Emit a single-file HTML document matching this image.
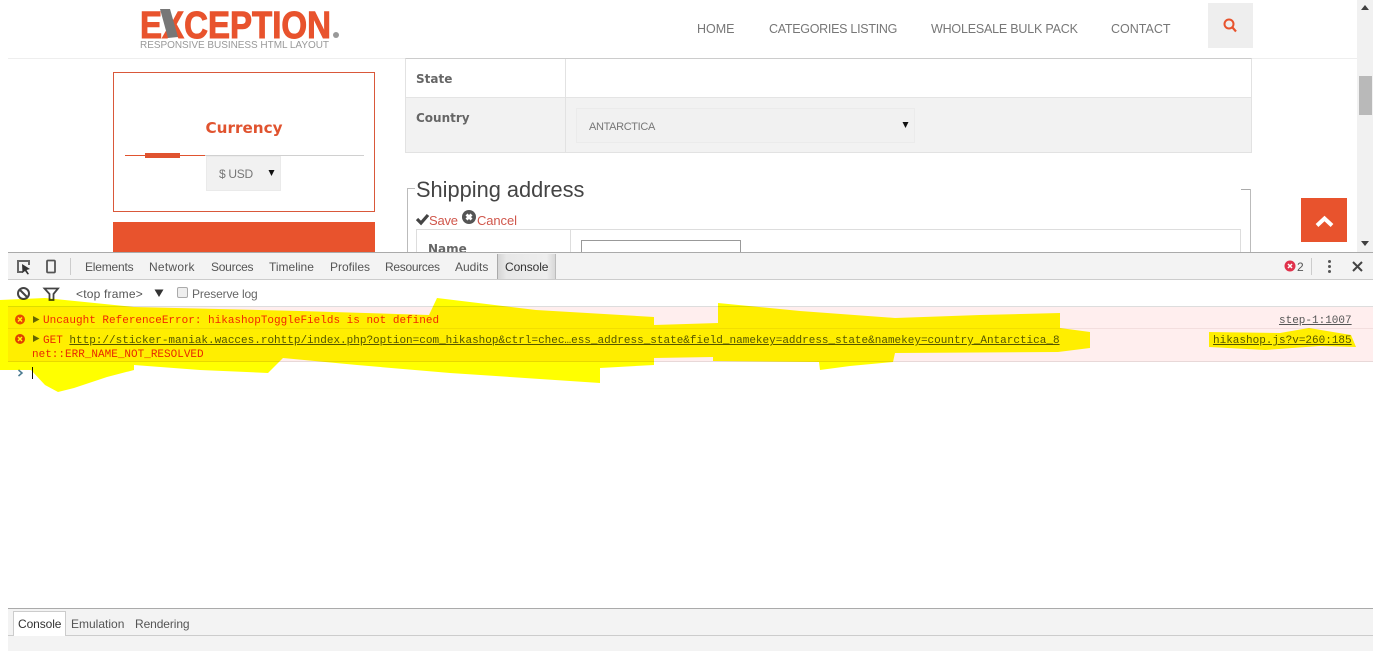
<!DOCTYPE html>
<html><head><meta charset="utf-8">
<style>
html,body{margin:0;padding:0;background:#fff;width:1373px;height:651px;overflow:hidden}
body{position:relative;font-family:"Liberation Sans",sans-serif}
.a{position:absolute;white-space:nowrap}
.box{position:absolute;box-sizing:border-box}
.dt{font-size:12px;color:#555;top:260px;line-height:14px}
.m{font-family:"Liberation Mono",monospace;font-size:11px;line-height:14px}
.nav{top:21px;font-size:12.5px;color:#777;line-height:16px}
</style></head><body>

<!-- page header -->
<svg class="a" style="left:130px;top:0" width="220" height="55">
<text x="10" y="38" font-family="Liberation Sans" font-weight="bold" font-size="38" fill="#e8532d" stroke="#e8532d" stroke-width="1" textLength="191" lengthAdjust="spacingAndGlyphs">EXCEPTION</text>
<path d="M30 9L40 9L48 37L38 38Z" fill="#777"/>
<circle cx="206" cy="35" r="3" fill="#999"/>
<text x="10" y="48" font-family="Liberation Sans" font-size="10" fill="#999" textLength="189" lengthAdjust="spacing">RESPONSIVE BUSINESS HTML LAYOUT</text>
</svg>
<div class="a nav" style="left:697px">HOME</div>
<div class="a nav" style="left:769px;letter-spacing:-.28px">CATEGORIES LISTING</div>
<div class="a nav" style="left:931px;letter-spacing:-.2px">WHOLESALE BULK PACK</div>
<div class="a nav" style="left:1111px">CONTACT</div>
<div class="box" style="left:1208px;top:3px;width:45px;height:45px;background:#eee"></div>
<svg class="a" style="left:1222px;top:17px" width="16" height="16"><circle cx="7" cy="7" r="4.500" fill="none" stroke="#e8532d" stroke-width="2"/><path d="M10.500 10.500L14 14.500" stroke="#e8532d" stroke-width="2.200"/></svg>
<div class="box" style="left:8px;top:58px;width:1349px;height:1px;background:#eee"></div>

<!-- scrollbar -->
<div class="box" style="left:1357px;top:0;width:16px;height:252px;background:#f1f1f1"></div>
<div class="box" style="left:1359px;top:76px;width:13px;height:39px;background:#b9b9b9"></div>
<svg class="a" style="left:1357px;top:0" width="16" height="252"><path d="M4 10L8 5L12 10Z" fill="#404040"/><path d="M4 241L8 246L12 241Z" fill="#404040"/></svg>

<!-- currency -->
<div class="box" style="left:113px;top:72px;width:262px;height:140px;border:1px solid #d9583a"></div>
<div class="a" style="left:113px;width:262px;top:118px;text-align:center;font-weight:bold;line-height:20px;color:#e0532f;font-family:'DejaVu Sans','Liberation Sans',sans-serif;font-size:15.200px">Currency</div>
<div class="box" style="left:125px;top:155px;width:239px;height:1px;background:#d0d0d0"></div>
<div class="box" style="left:125px;top:155px;width:80px;height:1px;background:#e0532f"></div>
<div class="box" style="left:145px;top:153px;width:35px;height:5px;background:#e0532f"></div>
<div class="box" style="left:206px;top:156px;width:75px;height:35px;background:#f1f1f1;border:1px solid #eaeaea"></div>
<div class="a" style="left:219px;top:166px;font-size:12px;letter-spacing:-.3px;line-height:16px;color:#777">$ USD</div>
<svg class="a" style="left:267px;top:169px" width="9" height="8"><path d="M1.500 1H7.500L4.500 7Z" fill="#111"/></svg>
<div class="box" style="left:113px;top:222px;width:262px;height:30px;background:#e8532d"></div>

<!-- form table -->
<div class="box" style="left:405px;top:58px;width:847px;height:95px;border:1px solid #e2e2e2;border-top-color:#ccc"></div>
<div class="box" style="left:406px;top:97px;width:845px;height:55px;background:#f2f2f2;border-top:1px solid #e4e4e4"></div>
<div class="box" style="left:565px;top:59px;width:1px;height:93px;background:#e2e2e2"></div>
<div class="a" style="left:416px;top:71px;font-weight:bold;line-height:16px;color:#666;font-family:'DejaVu Sans',sans-serif;font-size:12px">State</div>
<div class="a" style="left:416px;top:110px;font-weight:bold;font-size:12px;line-height:16px;color:#666;font-family:'DejaVu Sans',sans-serif">Country</div>
<div class="box" style="left:576px;top:108px;width:339px;height:35px;background:#f1f1f1;border:1px solid #ebebeb"></div>
<div class="a" style="left:589px;top:119px;font-size:11px;letter-spacing:-.35px;line-height:16px;color:#777">ANTARCTICA</div>
<svg class="a" style="left:901px;top:121px" width="9" height="8"><path d="M1.500 1H7.500L4.500 7Z" fill="#111"/></svg>

<!-- shipping fieldset -->
<div class="box" style="left:407px;top:188px;width:1px;height:64px;background:#bbb"></div>
<div class="box" style="left:407px;top:188px;width:8px;height:1px;background:#bbb"></div>
<div class="box" style="left:1241px;top:189px;width:10px;height:1px;background:#aaa"></div>
<div class="box" style="left:1250px;top:189px;width:1px;height:63px;background:#bbb"></div>
<div class="a" style="left:416px;top:176px;font-size:21.800px;line-height:28px;color:#444">Shipping address</div>
<svg class="a" style="left:416px;top:212px" width="14" height="14"><path d="M1 7L5 11L12 3" fill="none" stroke="#444" stroke-width="3.200"/></svg>
<div class="a" style="left:429px;top:212px;font-size:13px;letter-spacing:-.2px;line-height:17px;color:#d0574c">Save</div>
<svg class="a" style="left:462px;top:210px" width="15" height="15"><circle cx="7" cy="7" r="7" fill="#555"/><path d="M4.500 4.500L9.500 9.500M9.500 4.500L4.500 9.500" stroke="#fff" stroke-width="2.800"/></svg>
<div class="a" style="left:477px;top:212px;font-size:13px;letter-spacing:-.1px;line-height:17px;color:#d0574c">Cancel</div>
<div class="box" style="left:416px;top:229px;width:825px;height:23px;border:1px solid #ddd;border-bottom:0"></div>
<div class="box" style="left:570px;top:230px;width:1px;height:22px;background:#ddd"></div>
<div style="position:absolute;left:428px;top:241px;height:11px;overflow:hidden"><div style="font-weight:bold;line-height:16px;color:#666;font-family:'DejaVu Sans',sans-serif;font-size:12px">Name</div></div>
<div class="box" style="left:581px;top:240px;width:160px;height:12px;border:1px solid #999;border-bottom:0"></div>

<div class="box" style="left:1301px;top:198px;width:46px;height:44px;background:#e8532d"></div>
<svg class="a" style="left:1301px;top:198px" width="46" height="44"><path d="M16 27.500L23.500 20.500L31 27.500" fill="none" stroke="#fff" stroke-width="4"/></svg>

<!-- devtools -->
<div class="box" style="left:8px;top:252px;width:1365px;height:399px;background:#fff"></div>
<div class="box" style="left:8px;top:252px;width:1365px;height:28px;background:#f3f3f3;border-top:1px solid #aaa;border-bottom:1px solid #ccc"></div>
<svg class="a" style="left:14px;top:258px" width="46" height="18">
<path d="M9 14H4V3H15V7" fill="none" stroke="#666" stroke-width="2"/><path d="M8 6L16 11L12.500 12L15 16L13.500 16.500L11 13L8.500 15Z" fill="#333"/>
<rect x="33" y="2.500" width="8" height="12" rx="1" fill="none" stroke="#555" stroke-width="1.800"/>
</svg>
<div class="box" style="left:70px;top:258px;width:1px;height:17px;background:#ccc"></div>
<div class="a dt" style="left:85px;letter-spacing:-.2px">Elements</div>
<div class="a dt" style="left:149px;letter-spacing:.25px">Network</div>
<div class="a dt" style="left:211px;letter-spacing:-.25px">Sources</div>
<div class="a dt" style="left:269px">Timeline</div>
<div class="a dt" style="left:330px">Profiles</div>
<div class="a dt" style="left:385px;letter-spacing:-.3px">Resources</div>
<div class="a dt" style="left:455px">Audits</div>
<div class="box" style="left:497px;top:254px;width:59px;height:25px;background:linear-gradient(90deg,#d5d5d5,#e8e8e8 15%,#eee 85%,#d8d8d8);border-left:1px solid #aaa;border-right:1px solid #bbb"></div>
<div class="a dt" style="left:505px;color:#333;letter-spacing:-.1px">Console</div>
<svg class="a" style="left:1284px;top:260px" width="12" height="12"><circle cx="6" cy="6" r="5.500" fill="#e0314b"/><path d="M4 4L8 8M8 4L4 8" stroke="#fff" stroke-width="1.500"/></svg>
<div class="a dt" style="left:1297px;color:#555">2</div>
<div class="box" style="left:1311px;top:258px;width:1px;height:17px;background:#ccc"></div>
<svg class="a" style="left:1322px;top:258px" width="44" height="18"><circle cx="7.500" cy="3.500" r="1.500" fill="#555"/><circle cx="7.500" cy="8.500" r="1.500" fill="#555"/><circle cx="7.500" cy="13.500" r="1.500" fill="#555"/><path d="M31 4L40 13M40 4L31 13" stroke="#444" stroke-width="2"/></svg>

<!-- console toolbar -->
<svg class="a" style="left:15px;top:286px" width="46" height="16"><circle cx="8.500" cy="7.500" r="5.500" fill="none" stroke="#444" stroke-width="2"/><path d="M4.500 3.500L12.500 11.500" stroke="#444" stroke-width="2"/><path d="M29.500 2.500H43L38.500 8V14H34.500V8Z" fill="none" stroke="#444" stroke-width="1.800"/></svg>
<div class="a" style="left:76px;top:287px;font-size:12px;letter-spacing:.2px;line-height:15px;color:#555">&lt;top frame&gt;</div>
<svg class="a" style="left:154px;top:289px" width="10" height="9"><path d="M0.500 0.500H9.500L5 8Z" fill="#333"/></svg>
<div class="box" style="left:177px;top:287px;width:11px;height:11px;background:#eee;border:1px solid #aaa;border-radius:2px"></div>
<div class="a" style="left:192px;top:287px;font-size:12px;letter-spacing:-.15px;line-height:15px;color:#666">Preserve log</div>
<div class="box" style="left:8px;top:306px;width:1365px;height:1px;background:#ddd"></div>

<!-- error rows -->
<div class="box" style="left:8px;top:307px;width:1365px;height:55px;background:#ffeeee;border-bottom:1px solid #e8d8d8"></div>
<div class="box" style="left:8px;top:328px;width:1365px;height:1px;background:#f3dede"></div>
<svg class="a" style="left:14px;top:313px" width="30" height="36">
<circle cx="6" cy="6.500" r="5" fill="#e8482a"/><path d="M4 4.500L8 8.500M8 4.500L4 8.500" stroke="#fff" stroke-width="1.400"/>
<circle cx="6" cy="26" r="5" fill="#e0403a"/><path d="M4 24L8 28M8 24L4 28" stroke="#fff" stroke-width="1.400"/>
<path d="M19 3L25.500 6.500L19 10Z" fill="#665"/><path d="M19 22L25.500 25.500L19 29Z" fill="#665"/>
</svg>
<div class="a m" style="left:43px;top:314px;color:#f02800">Uncaught ReferenceError: hikashopToggleFields is not defined</div>
<div class="a m" style="left:1279px;top:314px;color:#555;text-decoration:underline">step-1:1007</div>
<div class="a m" style="left:43px;top:334px;color:#e82800">GET <span style="color:#555;text-decoration:underline">http://sticker-maniak.wacces.rohttp/index.php?option=com_hikashop&amp;ctrl=chec…ess_address_state&amp;field_namekey=address_state&amp;namekey=country_Antarctica_8</span></div>
<div class="a m" style="left:1213px;top:334px;color:#555;text-decoration:underline">hikashop.js?v=260:185</div>
<div class="a m" style="left:32px;top:348px;color:#e82800">net::ERR_NAME_NOT_RESOLVED</div>
<svg class="a" style="left:16px;top:367px" width="20" height="13"><path d="M2.500 3L6 6L2.500 9" fill="none" stroke="#4a7a90" stroke-width="1.500"/><path d="M16.500 0V12" stroke="#111"/></svg>

<!-- highlighter, multiplied over the console rows -->
<svg class="a" style="left:0;top:0;mix-blend-mode:multiply" width="1373" height="400">
<path fill="#ffff00" d="M0 300L45 298L134 307L300 311L429 315L437 298L536 310L654 317L654 325L718 323L718 303L800 311L895 318L980 315L1060 313L1060 328L1090 332L1090 348L1058 352L895 353L893 362L850 366L820 370L819 362L713 361L713 357L654 358L654 365L600 368L600 383L450 373L357 365L283 358L268 373L200 370L134 365L134 370L107 377L74 388L58 392L45 385L31 370L0 370Z"/>
<path fill="#ffff00" d="M1209 332L1280 333L1309 328L1351 335L1356 347L1320 346L1265 350L1209 347Z"/>
</svg>

<!-- drawer -->
<div class="box" style="left:8px;top:608px;width:1365px;height:43px;background:#f3f3f3;border-top:1px solid #aaa"></div>
<div class="box" style="left:8px;top:635px;width:1365px;height:1px;background:#ccc"></div>
<div class="box" style="left:13px;top:611px;width:53px;height:25px;background:#fff;border:1px solid #ccc;border-bottom:0"></div>
<div class="a dt" style="left:18px;top:617px;color:#333;letter-spacing:-.1px">Console</div>
<div class="a dt" style="left:71px;top:617px;color:#555">Emulation</div>
<div class="a dt" style="left:135px;top:617px;color:#555;letter-spacing:-.1px">Rendering</div>

</body></html>
